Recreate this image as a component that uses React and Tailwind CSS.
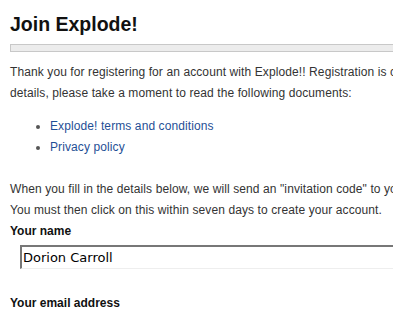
export default function App() {
  return (
    <div className="w-[393px] h-[314px] overflow-hidden bg-white font-['Liberation_Sans',Arial,sans-serif] text-[#333]">
      <div className="w-[600px] pl-[10px] pt-[12px]">
        <h1 className="text-[19.5px] font-bold leading-[24px] text-[#111]">Join Explode!</h1>
        <div className="mt-[8px] h-[8px] border border-[#c8c8c8] bg-[#ececec]" />

        <div className="mt-[10px] text-[12px] tracking-[0.1px] leading-[21px] whitespace-nowrap">
          <p>Thank you for registering for an account with Explode!! Registration is completely free. Before entering your</p>
          <p>details, please take a moment to read the following documents:</p>
        </div>

        <ul className="mt-[12px] pl-[40px] list-disc text-[12px] tracking-[0.1px] leading-[21px] text-[#1f4f96] marker:text-[#555]">
          <li><a href="#">Explode! terms and conditions</a></li>
          <li><a href="#">Privacy policy</a></li>
        </ul>

        <div className="mt-[21px] text-[12px] tracking-[0.1px] leading-[21px] whitespace-nowrap">
          <p>When you fill in the details below, we will send an "invitation code" to your email address.</p>
          <p>You must then click on this within seven days to create your account.</p>
        </div>

        <label className="block text-[12px] leading-[20px] font-bold text-[#111]">Your name</label>
        <div className="mt-[4px] ml-[10px]">
          <input
            type="text"
            defaultValue="Dorion Carroll"
            className="w-[500px] h-[24px] px-[1px] border-t-2 border-l-2 border-r border-b border-t-[#777] border-l-[#777] border-r-[#ddd] border-b-[#eee] text-[13px] text-black font-['DejaVu_Sans',sans-serif] outline-none"
          />
        </div>

        <label className="block mt-[24px] text-[12px] leading-[20px] font-bold text-[#111]">Your email address</label>
      </div>
    </div>
  );
}
